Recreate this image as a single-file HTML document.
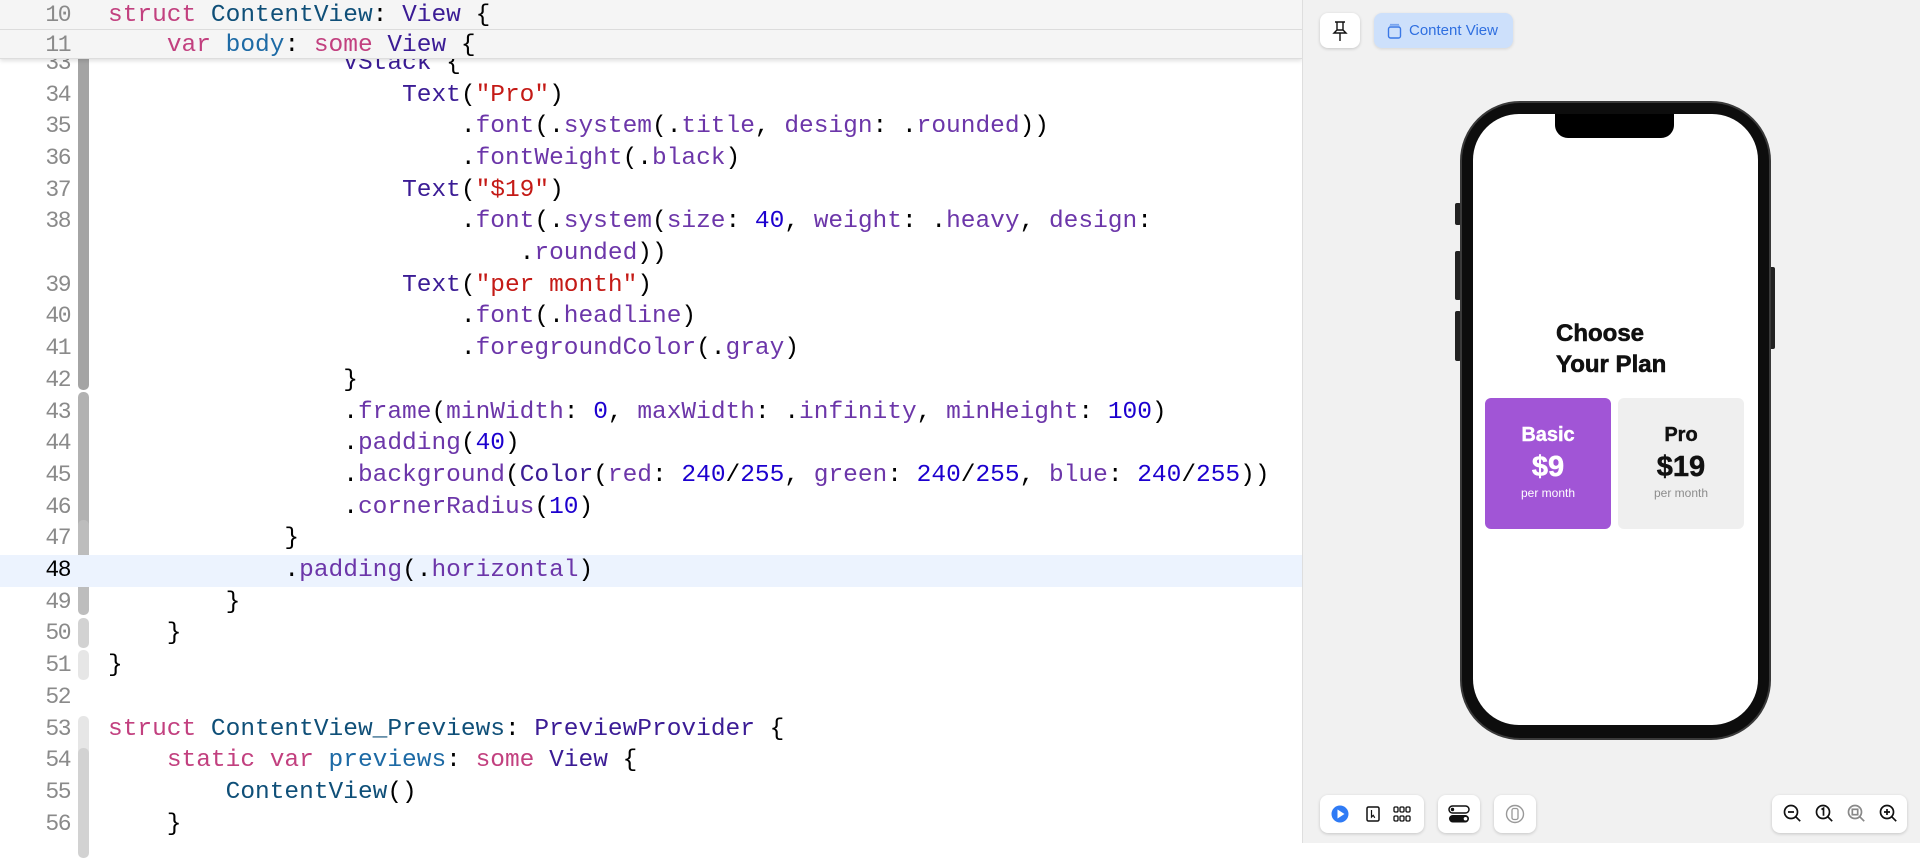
<!DOCTYPE html>
<html><head><meta charset="utf-8"><style>
*{margin:0;padding:0;box-sizing:border-box}
body{width:1920px;height:843px;overflow:hidden;background:#fff;position:relative;font-family:"Liberation Mono",monospace}
.rows{position:absolute;left:0;top:2.5px;width:1302px;height:843px}
.row{position:absolute;left:0;width:1302px;height:31.7px;line-height:31.7px;font-size:24.5px;white-space:pre;color:#000}
.num{position:absolute;right:1232px;width:60px;text-align:right;color:#8a8a8a;font-size:23px;letter-spacing:-1.5px}
.code{position:absolute;left:108px}
.k{color:#c2407f}.t{color:#3b1c95}.d{color:#0f4f78}.p{color:#1d6aa5}.m{color:#6c36a9}.s{color:#c41a16}.n{color:#1c00cf}
.bar{position:absolute;left:78px;width:11px;border-radius:5px}
.btn{position:absolute;background:#fff;border-radius:8px;box-shadow:0 1px 3px rgba(0,0,0,.18)}
</style></head><body>
<div class="bar" style="top:40px;height:350px;background:#a4a4a4"></div>
<div class="bar" style="top:392px;height:158px;background:#b2b2b2"></div>
<div class="bar" style="top:520px;height:95px;background:#bdbdbd"></div>
<div class="bar" style="top:618px;height:30px;background:#d2d2d2"></div>
<div class="bar" style="top:650px;height:30px;background:#e6e6e6"></div>
<div class="bar" style="top:716px;height:140px;background:#e6e6e6"></div>
<div class="bar" style="top:748px;height:110px;background:#d2d2d2"></div>
<div style="position:absolute;left:0;top:555px;width:1302px;height:32px;background:#ecf3fe"></div>

<div class="rows">
<div class="row" style="top:45px"><span class="num">33</span><span class="code">                <span class="t">VStack</span> {</span></div>
<div class="row" style="top:77px"><span class="num">34</span><span class="code">                    <span class="t">Text</span>(<span class="s">"Pro"</span>)</span></div>
<div class="row" style="top:108.7px"><span class="num">35</span><span class="code">                        .<span class="m">font</span>(.<span class="m">system</span>(.<span class="m">title</span>, <span class="m">design</span>: .<span class="m">rounded</span>))</span></div>
<div class="row" style="top:140.4px"><span class="num">36</span><span class="code">                        .<span class="m">fontWeight</span>(.<span class="m">black</span>)</span></div>
<div class="row" style="top:172.1px"><span class="num">37</span><span class="code">                    <span class="t">Text</span>(<span class="s">"$19"</span>)</span></div>
<div class="row" style="top:203.8px"><span class="num">38</span><span class="code">                        .<span class="m">font</span>(.<span class="m">system</span>(<span class="m">size</span>: <span class="n">40</span>, <span class="m">weight</span>: .<span class="m">heavy</span>, <span class="m">design</span>:</span></div>
<div class="row" style="top:235.5px"><span class="code">                            .<span class="m">rounded</span>))</span></div>
<div class="row" style="top:267.2px"><span class="num">39</span><span class="code">                    <span class="t">Text</span>(<span class="s">"per month"</span>)</span></div>
<div class="row" style="top:298.9px"><span class="num">40</span><span class="code">                        .<span class="m">font</span>(.<span class="m">headline</span>)</span></div>
<div class="row" style="top:330.6px"><span class="num">41</span><span class="code">                        .<span class="m">foregroundColor</span>(.<span class="m">gray</span>)</span></div>
<div class="row" style="top:362.3px"><span class="num">42</span><span class="code">                }</span></div>
<div class="row" style="top:394px"><span class="num">43</span><span class="code">                .<span class="m">frame</span>(<span class="m">minWidth</span>: <span class="n">0</span>, <span class="m">maxWidth</span>: .<span class="m">infinity</span>, <span class="m">minHeight</span>: <span class="n">100</span>)</span></div>
<div class="row" style="top:425.7px"><span class="num">44</span><span class="code">                .<span class="m">padding</span>(<span class="n">40</span>)</span></div>
<div class="row" style="top:457.4px"><span class="num">45</span><span class="code">                .<span class="m">background</span>(<span class="t">Color</span>(<span class="m">red</span>: <span class="n">240</span>/<span class="n">255</span>, <span class="m">green</span>: <span class="n">240</span>/<span class="n">255</span>, <span class="m">blue</span>: <span class="n">240</span>/<span class="n">255</span>))</span></div>
<div class="row" style="top:489.1px"><span class="num">46</span><span class="code">                .<span class="m">cornerRadius</span>(<span class="n">10</span>)</span></div>
<div class="row" style="top:520.8px"><span class="num">47</span><span class="code">            }</span></div>
<div class="row" style="top:552.5px"><span class="num" style="color:#000">48</span><span class="code">            .<span class="m">padding</span>(.<span class="m">horizontal</span>)</span></div>
<div class="row" style="top:584.2px"><span class="num">49</span><span class="code">        }</span></div>
<div class="row" style="top:615.9px"><span class="num">50</span><span class="code">    }</span></div>
<div class="row" style="top:647.6px"><span class="num">51</span><span class="code">}</span></div>
<div class="row" style="top:679.3px"><span class="num">52</span></div>
<div class="row" style="top:711px"><span class="num">53</span><span class="code"><span class="k">struct</span> <span class="d">ContentView_Previews</span>: <span class="t">PreviewProvider</span> {</span></div>
<div class="row" style="top:742.7px"><span class="num">54</span><span class="code">    <span class="k">static</span> <span class="k">var</span> <span class="p">previews</span>: <span class="k">some</span> <span class="t">View</span> {</span></div>
<div class="row" style="top:774.4px"><span class="num">55</span><span class="code">        <span class="d">ContentView</span>()</span></div>
<div class="row" style="top:806.1px"><span class="num">56</span><span class="code">    }</span></div>
</div>

<div style="position:absolute;left:0;top:0;width:1302px;height:59px;background:#f5f5f5;box-shadow:0 2px 4px rgba(0,0,0,.12);border-bottom:1px solid #ddd"></div>
<div style="position:absolute;left:0;top:29px;width:1302px;height:1px;background:#dcdcdc"></div>
<div class="row" style="top:0px"><span class="num">10</span><span class="code"><span class="k">struct</span> <span class="d">ContentView</span>: <span class="t">View</span> {</span></div>
<div class="row" style="top:30px"><span class="num">11</span><span class="code">    <span class="k">var</span> <span class="p">body</span>: <span class="k">some</span> <span class="t">View</span> {</span></div>

<div style="position:absolute;left:1302px;top:0;width:618px;height:843px;background:#f1f1f1;border-left:1px solid #dedede"></div>
<div class="btn" style="left:1320px;top:13px;width:40px;height:35px">
<svg width="40" height="35" viewBox="0 0 40 35"><g fill="none" stroke="#111" stroke-width="1.4"><path d="M15 9h10M17 9v8M23 9v8M14 20h12l-3-3h-6zM20 20v8"/></g></svg></div>
<div style="position:absolute;left:1374px;top:13px;width:139px;height:35px;background:#cde0fb;border-radius:8px;box-shadow:0 1px 3px rgba(0,0,0,.12)">
<svg style="position:absolute;left:12px;top:8px" width="18" height="20" viewBox="0 0 18 20"><rect x="2.5" y="6" width="12" height="11" rx="2" fill="none" stroke="#3a78e6" stroke-width="1.4"/><path d="M4 3.5h9M3.5 5h10" stroke="#7aa5ee" stroke-width="1.2"/></svg>
<span style="position:absolute;left:35px;top:9px;font-family:'Liberation Sans',sans-serif;font-size:15px;color:#2f6fe0">Content View</span></div>

<div style="position:absolute;left:1455px;top:203px;width:6px;height:22px;background:#222;border-radius:2px"></div>
<div style="position:absolute;left:1455px;top:251px;width:6px;height:49px;background:#222;border-radius:2px"></div>
<div style="position:absolute;left:1455px;top:311px;width:6px;height:50px;background:#222;border-radius:2px"></div>
<div style="position:absolute;left:1769px;top:267px;width:6px;height:82px;background:#222;border-radius:2px"></div>
<div style="position:absolute;left:1460px;top:101px;width:311px;height:639px;background:#0d0d0d;border-radius:60px;border:2px solid #3a3a3a"></div>
<div style="position:absolute;left:1473px;top:114px;width:285px;height:611px;background:#fff;border-radius:46px;overflow:hidden;font-family:'Liberation Sans',sans-serif">
  <div style="position:absolute;left:82px;top:0;width:119px;height:24px;background:#000;border-radius:0 0 13px 13px"></div>
  <div style="position:absolute;left:83px;top:204px;font-size:24px;font-weight:900;line-height:31px;color:#111;-webkit-text-stroke:0.6px #111">Choose<br>Your Plan</div>
  <div style="position:absolute;left:12px;top:284px;width:126px;height:131px;background:#a155d6;border-radius:6px;color:#fff;text-align:center">
    <div style="position:absolute;top:26px;width:100%;font-size:20px;font-weight:bold;-webkit-text-stroke:0.4px #fff">Basic</div>
    <div style="position:absolute;top:53px;width:100%;font-size:29px;font-weight:bold;-webkit-text-stroke:0.5px #fff">$9</div>
    <div style="position:absolute;top:88px;width:100%;font-size:12px">per month</div>
  </div>
  <div style="position:absolute;left:145px;top:284px;width:126px;height:131px;background:#efefef;border-radius:6px;color:#111;text-align:center">
    <div style="position:absolute;top:26px;width:100%;font-size:20px;font-weight:bold;-webkit-text-stroke:0.4px #111">Pro</div>
    <div style="position:absolute;top:53px;width:100%;font-size:29px;font-weight:bold;-webkit-text-stroke:0.5px #111">$19</div>
    <div style="position:absolute;top:88px;width:100%;font-size:12px;color:#8c8c8c">per month</div>
  </div>
</div>

<div class="btn" style="left:1320px;top:795px;width:104px;height:38px">
<svg width="104" height="38" viewBox="0 0 104 38"><circle cx="20" cy="19" r="8.5" fill="#2f7bf5"/><path d="M17.5 14.5v9l7-4.5z" fill="#fff"/>
<rect x="47" y="12" width="12" height="14" rx="1.5" fill="none" stroke="#111" stroke-width="1.5"/><path d="M51.5 15v7l1.7-1.7 1.6 2.5" fill="none" stroke="#111" stroke-width="1.2"/>
<g fill="none" stroke="#111" stroke-width="1.3"><rect x="74" y="12" width="4" height="5" rx="1.2"/><rect x="80" y="12" width="4" height="5" rx="1.2"/><rect x="86" y="12" width="4" height="5" rx="1.2"/><rect x="74" y="21" width="4" height="5" rx="1.2"/><rect x="80" y="21" width="4" height="5" rx="1.2"/><rect x="86" y="21" width="4" height="5" rx="1.2"/></g></svg></div>
<div class="btn" style="left:1438px;top:795px;width:42px;height:38px">
<svg width="42" height="38" viewBox="0 0 42 38"><rect x="11" y="11" width="20" height="7" rx="3.5" fill="none" stroke="#111" stroke-width="1.5"/><circle cx="14.5" cy="14.5" r="1.7" fill="#111"/><rect x="11" y="20" width="20" height="7.5" rx="3.75" fill="#111"/><circle cx="27.5" cy="23.75" r="1.8" fill="#fff"/></svg></div>
<div class="btn" style="left:1494px;top:795px;width:42px;height:38px">
<svg width="42" height="38" viewBox="0 0 42 38"><circle cx="21" cy="19" r="8.5" fill="none" stroke="#999" stroke-width="1.4"/><rect x="18" y="13.5" width="6" height="11" rx="1.8" fill="none" stroke="#999" stroke-width="1.3"/></svg></div>
<div class="btn" style="left:1772px;top:795px;width:135px;height:38px">
<svg width="135" height="38" viewBox="0 0 135 38"><g fill="none" stroke="#111" stroke-width="1.7">
<circle cx="19" cy="17" r="6.5"/><path d="M23.7 21.7l4.5 4.5M16 17h6"/>
<circle cx="51" cy="17" r="6.5"/><path d="M55.7 21.7l4.5 4.5M49.5 14.5l2-1.2v7.5"/>
<g stroke="#888"><circle cx="83" cy="17" r="6.5"/><path d="M87.7 21.7l4.5 4.5"/><rect x="80.3" y="14.3" width="5.4" height="5.4"/></g>
<circle cx="115" cy="17" r="6.5"/><path d="M119.7 21.7l4.5 4.5M112 17h6M115 14v6"/></g></svg></div>
</body></html>
